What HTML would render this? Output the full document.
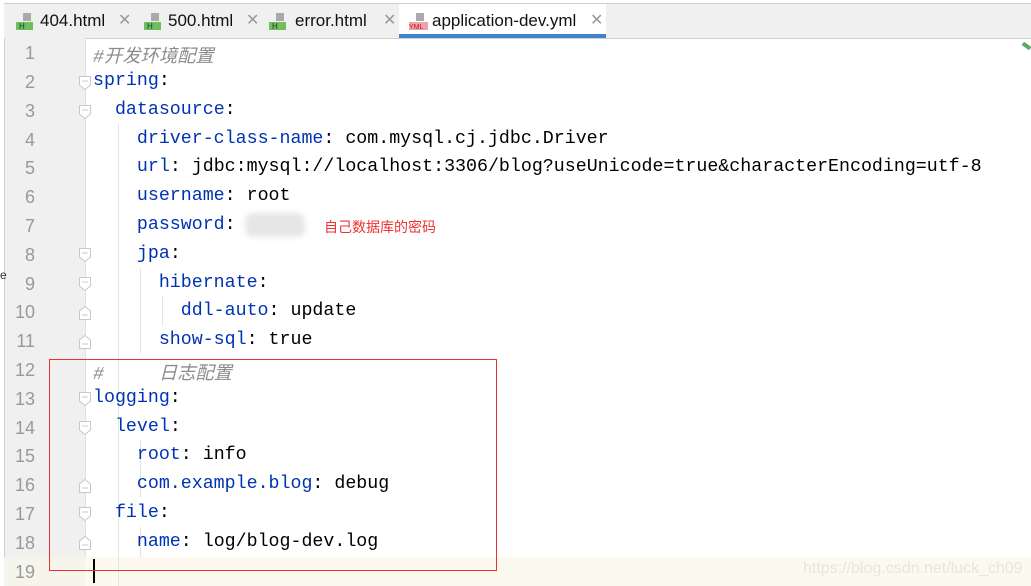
<!DOCTYPE html>
<html><head><meta charset="utf-8"><style>
body{margin:0;width:1031px;height:586px;background:#fff;position:relative;overflow:hidden;font-family:"Liberation Sans","Noto Sans CJK SC",sans-serif}
.tabs{position:absolute;left:4px;top:3px;right:0;height:34px;background:#f0f0f0;border-top:1px solid #d0d0d0;border-bottom:1px solid #d0d0d0}
.tab{position:absolute;top:0;height:34px;font-size:17px;color:#111;line-height:34px}
.tab .x{color:#999;position:absolute;top:0;font-size:16px}
.ic{position:absolute;top:9px;width:19px;height:17px}
.gut{position:absolute;left:4px;top:38px;width:80px;bottom:0;background:#f0f0f0;border-left:1px solid #d0d0d0;border-right:1px solid #e0e0e0}
.ln{position:absolute;left:4px;width:31px;text-align:right;font-family:"Liberation Sans",sans-serif;font-size:18px;color:#999}
.code{position:absolute;left:93px;font-family:"Liberation Mono","Noto Sans CJK SC",monospace;font-size:18.3px;color:#000;white-space:pre}
.k{color:#0033b3}
.c{color:#8c8c8c;font-style:italic}
.g{position:absolute;width:1px;background:#e4e4e4}
.f{position:absolute;left:79px;width:12px;height:14px}
</style></head><body>
<div class="tabs">
 <div class="tab" style="left:10px"><svg class="ic" style="left:2px"><rect x="7" y="0" width="8" height="8" fill="#aaa"/><rect x="0" y="9" width="17" height="8" fill="#6fbf5a"/><text x="3" y="16" font-size="8" fill="#234">H</text></svg><span style="position:absolute;left:26px">404.html</span><span class="x" style="left:104px">✕</span></div>
 <div class="tab" style="left:138px"><svg class="ic" style="left:2px"><rect x="7" y="0" width="8" height="8" fill="#aaa"/><rect x="0" y="9" width="17" height="8" fill="#6fbf5a"/><text x="3" y="16" font-size="8" fill="#234">H</text></svg><span style="position:absolute;left:26px">500.html</span><span class="x" style="left:104px">✕</span></div>
 <div class="tab" style="left:263px"><svg class="ic" style="left:2px"><rect x="7" y="0" width="8" height="8" fill="#aaa"/><rect x="0" y="9" width="17" height="8" fill="#6fbf5a"/><text x="3" y="16" font-size="8" fill="#234">H</text></svg><span style="position:absolute;left:28px">error.html</span><span class="x" style="left:116px">✕</span></div>
 <div class="tab" style="left:395px;width:207px;background:#fff;border-bottom:4px solid #4083c9;height:30px"><svg class="ic" style="left:10px"><rect x="7" y="0" width="8" height="8" fill="#aaa"/><rect x="0" y="9" width="19" height="8" fill="#f3a0a8"/><text x="0" y="16" font-size="7" fill="#a22">YML</text></svg><span style="position:absolute;left:33px">application-dev.yml</span><span class="x" style="left:191px">✕</span></div>
</div>
<div class="gut"></div>
<div style="position:absolute;left:85px;right:0;top:557px;height:29px;background:#fcfaee"></div>
<div style="position:absolute;left:4px;width:81px;top:557px;height:29px;background:#f6f5ec"></div>
<div style="position:absolute;left:93px;top:559px;width:2px;height:24px;background:#000"></div>
<div class="g" style="left:118px;top:124px;height:462px"></div>
<div class="g" style="left:140px;top:268px;height:86px"></div>
<div class="g" style="left:162px;top:297px;height:29px"></div>
<div class="g" style="left:140px;top:440px;height:58px"></div>
<div class="g" style="left:140px;top:527px;height:30px"></div>
<svg class="f" style="top:76px"><path d="M.5 .5H11.5V9L6 13.5.5 9Z M3 5H9" fill="#fff" stroke="#c8c8c8"/></svg>
<svg class="f" style="top:105px"><path d="M.5 .5H11.5V9L6 13.5.5 9Z M3 5H9" fill="#fff" stroke="#c8c8c8"/></svg>
<svg class="f" style="top:248px"><path d="M.5 .5H11.5V9L6 13.5.5 9Z M3 5H9" fill="#fff" stroke="#c8c8c8"/></svg>
<svg class="f" style="top:277px"><path d="M.5 .5H11.5V9L6 13.5.5 9Z M3 5H9" fill="#fff" stroke="#c8c8c8"/></svg>
<svg class="f" style="top:306px"><path d="M.5 13.5H11.5V5L6 .5.5 5Z M3 9H9" fill="#fff" stroke="#c8c8c8"/></svg>
<svg class="f" style="top:335px"><path d="M.5 13.5H11.5V5L6 .5.5 5Z M3 9H9" fill="#fff" stroke="#c8c8c8"/></svg>
<svg class="f" style="top:392px"><path d="M.5 .5H11.5V9L6 13.5.5 9Z M3 5H9" fill="#fff" stroke="#c8c8c8"/></svg>
<svg class="f" style="top:421px"><path d="M.5 .5H11.5V9L6 13.5.5 9Z M3 5H9" fill="#fff" stroke="#c8c8c8"/></svg>
<svg class="f" style="top:479px"><path d="M.5 13.5H11.5V5L6 .5.5 5Z M3 9H9" fill="#fff" stroke="#c8c8c8"/></svg>
<svg class="f" style="top:507px"><path d="M.5 .5H11.5V9L6 13.5.5 9Z M3 5H9" fill="#fff" stroke="#c8c8c8"/></svg>
<svg class="f" style="top:536px"><path d="M.5 13.5H11.5V5L6 .5.5 5Z M3 9H9" fill="#fff" stroke="#c8c8c8"/></svg>
<div style="position:absolute;left:1022px;top:44px;width:9px;height:4px;background:#59a869;transform:rotate(35deg)"></div>

<div class="ln" style="top:43px">1</div><div class="ln" style="top:72px">2</div><div class="ln" style="top:101px">3</div><div class="ln" style="top:130px">4</div><div class="ln" style="top:158px">5</div><div class="ln" style="top:187px">6</div><div class="ln" style="top:216px">7</div><div class="ln" style="top:245px">8</div><div class="ln" style="top:274px">9</div><div class="ln" style="top:302px">10</div><div class="ln" style="top:331px">11</div><div class="ln" style="top:360px">12</div><div class="ln" style="top:389px">13</div><div class="ln" style="top:418px">14</div><div class="ln" style="top:446px">15</div><div class="ln" style="top:475px">16</div><div class="ln" style="top:504px">17</div><div class="ln" style="top:533px">18</div><div class="ln" style="top:562px">19</div>

<div class="code c" style="top:42px">#开发环境配置</div>
<div class="code" style="top:71px"><span class="k">spring</span>:</div>
<div class="code" style="top:100px">  <span class="k">datasource</span>:</div>
<div class="code" style="top:129px">    <span class="k">driver-class-name</span>: com.mysql.cj.jdbc.Driver</div>
<div class="code" style="top:157px">    <span class="k">url</span>: jdbc:mysql://localhost:3306/blog?useUnicode=true&amp;characterEncoding=utf-8</div>
<div class="code" style="top:186px">    <span class="k">username</span>: root</div>
<div class="code" style="top:215px">    <span class="k">password</span>: </div>
<div style="position:absolute;left:245px;top:213px;width:60px;height:24px;background:#e6e6e6;border-radius:8px;filter:blur(3px)"></div>
<div style="position:absolute;left:324px;top:217px;font-size:14px;color:#f03030">自己数据库的密码</div>
<div class="code" style="top:244px">    <span class="k">jpa</span>:</div>
<div class="code" style="top:273px">      <span class="k">hibernate</span>:</div>
<div class="code" style="top:301px">        <span class="k">ddl-auto</span>: update</div>
<div class="code" style="top:330px">      <span class="k">show-sql</span>: true</div>
<div class="code c" style="top:359px">#     日志配置</div>
<div class="code" style="top:388px"><span class="k">logging</span>:</div>
<div class="code" style="top:417px">  <span class="k">level</span>:</div>
<div class="code" style="top:445px">    <span class="k">root</span>: info</div>
<div class="code" style="top:474px">    <span class="k">com.example.blog</span>: debug</div>
<div class="code" style="top:503px">  <span class="k">file</span>:</div>
<div class="code" style="top:532px">    <span class="k">name</span>: log/blog-dev.log</div>
<div style="position:absolute;left:49px;top:359px;width:446px;height:210px;border:1px solid #f03030"></div>
<div style="position:absolute;left:803px;top:560px;font-size:16px;color:#e6e6e0">https://blog.csdn.net/luck_ch09</div>
<div style="position:absolute;left:0;top:268px;font-size:12px;color:#333">e</div>
</body></html>
